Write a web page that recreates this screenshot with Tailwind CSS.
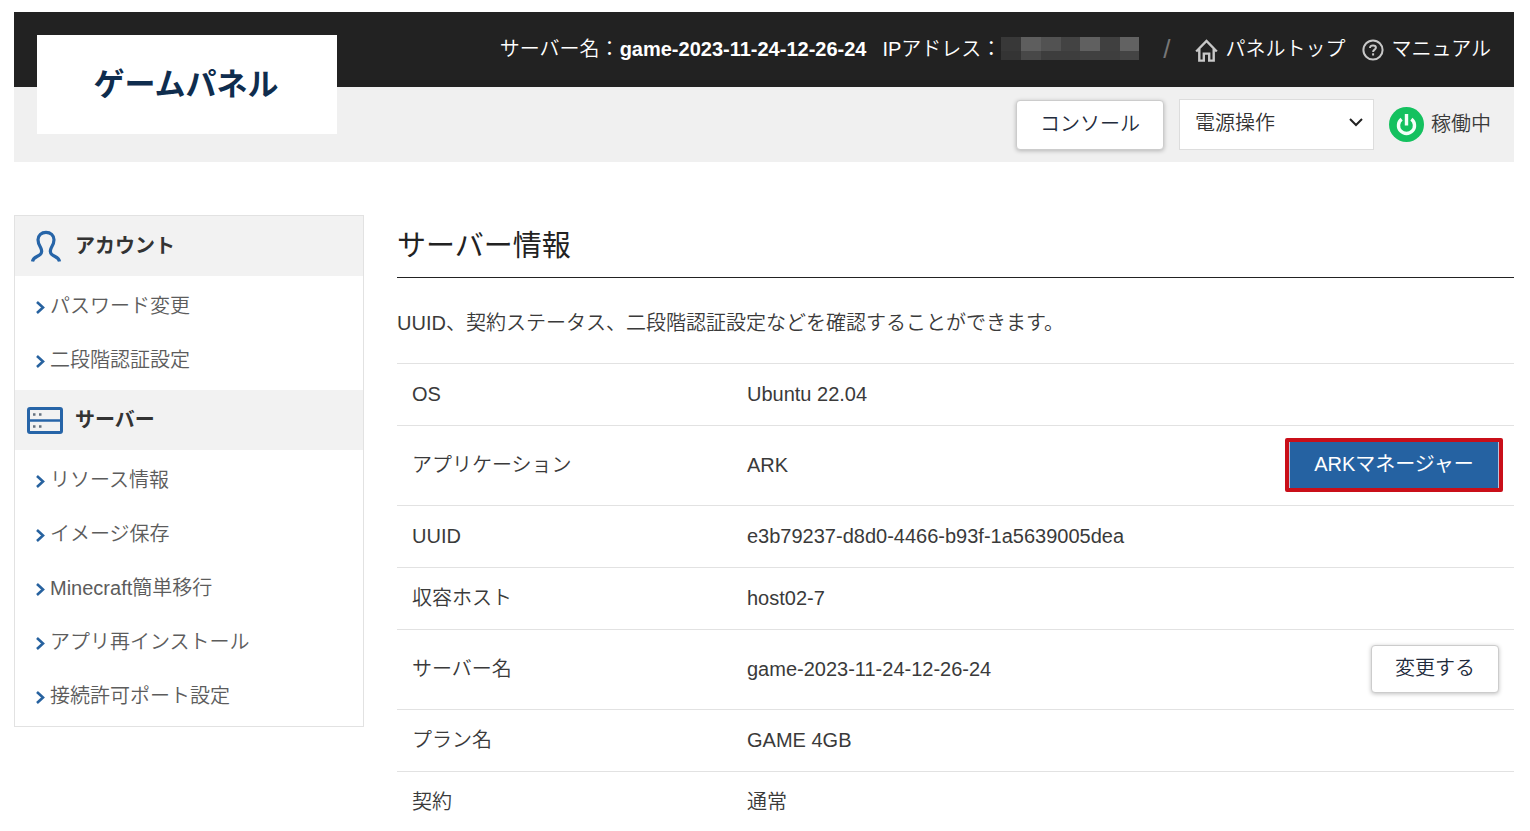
<!DOCTYPE html>
<html lang="ja">
<head>
<meta charset="utf-8">
<title>ゲームパネル</title>
<script src="https://cdn.jsdelivr.net/npm/@tailwindcss/browser@4"></script>
</head>
<body class="h-screen overflow-hidden bg-white px-[14px] pt-3 font-['Liberation_Sans','Noto_Sans_CJK_JP',sans-serif] text-[20px] leading-[30px] font-[350] text-[#3a3a3a]">
<header class="relative mr-[2px]">
  <a href="#" class="absolute top-[23px] left-[23px] flex h-[99px] w-[300px] items-center justify-center bg-white pr-[2px] text-[31px] font-bold text-[#0f2d4e]">ゲームパネル</a>
  <div class="flex h-[75px] items-center justify-end bg-[#222] pr-[23px] pb-[2px] text-white">
    <p>サーバー名：<strong class="font-bold">game-2023-11-24-12-26-24</strong></p>
    <p class="ml-4 flex items-center">IPアドレス：
      <span class="grid h-[23px] w-[138px] grid-cols-7 grid-rows-[14px_9px]" aria-hidden="true">
        <span class="bg-[#383838]"></span><span class="bg-[#5e5e5e]"></span><span class="bg-[#525252]"></span><span class="bg-[#434343]"></span><span class="bg-[#606060]"></span><span class="bg-[#404040]"></span><span class="bg-[#626262]"></span>
        <span class="bg-[#343434]"></span><span class="bg-[#484848]"></span><span class="bg-[#3d3d3d]"></span><span class="bg-[#3d3d3d]"></span><span class="bg-[#404040]"></span><span class="bg-[#3e3e3e]"></span><span class="bg-[#444]"></span>
      </span>
    </p>
    <span class="mx-6 text-[26px] text-[#777]">/</span>
    <a href="#" class="flex items-center gap-2">
      <svg class="mt-[3px] size-[23px]" viewBox="0 0 23 23" fill="none" stroke="#c8c8c8" stroke-width="2.400" aria-hidden="true"><path d="M1.200 12.500 11.500 2l10.300 10.500M4.300 10v11.600H8.800v-7h5.400v7h4.500V10"/></svg>
      パネルトップ</a>
    <a href="#" class="ml-4 flex items-center gap-2">
      <svg class="mt-[3px] size-[22px]" viewBox="0 0 22 22" fill="none" stroke="#c8c8c8" stroke-width="2" aria-hidden="true"><circle cx="11" cy="11" r="9.600"/><path d="M8 9c0-1.900 1.300-2.600 3-2.600s2.900.7 2.900 2.300c0 1.900-2.800 1.900-2.800 4.200"/><path d="M11.100 14.300v2.200"/></svg>
      マニュアル</a>
  </div>
  <div class="flex h-[75px] items-center justify-end bg-[#f0f0f0] pr-[23px]">
    <button type="button" class="h-[50px] w-[148px] rounded border border-[#ccc] bg-white pb-[2px] font-[350] text-[#222b3c] shadow-[0_1px_4px_rgba(0,0,0,0.25)]">コンソール</button>
    <div class="relative ml-[15px]">
      <select aria-label="電源操作" class="h-[51px] w-[195px] appearance-none border border-[#ddd] bg-white px-[15px] pb-1 font-[350] text-[#333]"><option>電源操作</option></select>
      <svg class="pointer-events-none absolute top-[19px] right-[11px] h-[9px] w-[14px]" viewBox="0 0 14 9" fill="none" stroke="#222" stroke-width="2" aria-hidden="true"><path d="M1 1l6 6 6-6"/></svg>
    </div>
    <svg class="ml-[15px] size-[35px]" viewBox="0 0 35 35" fill="none" stroke="#f4fff8" stroke-width="3.400" aria-hidden="true"><circle cx="17.500" cy="17.500" r="17.500" fill="#14c15f" stroke="none"/><path d="M12.600 12.200a8 8 0 1 0 9.800 0M17.500 7v11.500"/></svg>
    <span class="ml-[7px] pb-[2px]">稼働中</span>
  </div>
</header>

<div class="mt-[53px] mr-[2px] flex items-start gap-[33px]">
  <nav class="w-[350px] shrink-0 border border-[#e2e2e2] text-[#5c5c5c]">
    <h2 class="flex h-[60px] items-center bg-[#f2f2f2] pl-3 font-bold text-[#333]">
      <svg class="mr-3 h-[32px] w-[36px]" viewBox="0 0 36 32" fill="none" stroke="#2765a8" stroke-width="3.200" aria-hidden="true"><path d="M5.500 31.500C6 27.500 10 27 12.500 25c3-2 2.500-4.500 1.300-7C12 15.500 11 12.500 11 9.800 11 5.300 14.500 2.300 19 2.300s8 3 8 7.500c0 2.700-1 5.700-2.800 8.200-1.200 2.500-1.700 5 1.300 7 2.500 2 6.500 2.500 7 6.500"/></svg>
      アカウント</h2>
    <ul class="py-[3px]">
      <li><a href="#" class="flex h-[54px] items-center gap-[5px] pb-px pl-[21px]"><svg class="mt-[3px] h-[13px] w-[9px]" viewBox="0 0 9 13" fill="none" stroke="#27629f" stroke-width="2.600" aria-hidden="true"><path d="M1 1l6 5.500L1 12"/></svg>パスワード変更</a></li>
      <li><a href="#" class="flex h-[54px] items-center gap-[5px] pb-px pl-[21px]"><svg class="mt-[3px] h-[13px] w-[9px]" viewBox="0 0 9 13" fill="none" stroke="#27629f" stroke-width="2.600" aria-hidden="true"><path d="M1 1l6 5.500L1 12"/></svg>二段階認証設定</a></li>
    </ul>
    <h2 class="flex h-[60px] items-center bg-[#f2f2f2] pl-3 font-bold text-[#333]">
      <svg class="mr-3 h-[27px] w-[36px]" viewBox="0 0 36 27" fill="none" stroke="#2765a8" stroke-width="3" aria-hidden="true"><rect x="1.500" y="1.500" width="33" height="24" rx="1.500"/><path stroke-width="2.600" d="M1 13.500h34"/><path stroke="#65727f" stroke-width="2.400" d="M6 7.500h2.500M12 7.500h2.500M6 19.500h2.500M12 19.500h2.500"/></svg>
      サーバー</h2>
    <ul class="py-[3px]">
      <li><a href="#" class="flex h-[54px] items-center gap-[5px] pb-px pl-[21px]"><svg class="mt-[3px] h-[13px] w-[9px]" viewBox="0 0 9 13" fill="none" stroke="#27629f" stroke-width="2.600" aria-hidden="true"><path d="M1 1l6 5.500L1 12"/></svg>リソース情報</a></li>
      <li><a href="#" class="flex h-[54px] items-center gap-[5px] pb-px pl-[21px]"><svg class="mt-[3px] h-[13px] w-[9px]" viewBox="0 0 9 13" fill="none" stroke="#27629f" stroke-width="2.600" aria-hidden="true"><path d="M1 1l6 5.500L1 12"/></svg>イメージ保存</a></li>
      <li><a href="#" class="flex h-[54px] items-center gap-[5px] pb-px pl-[21px]"><svg class="mt-[3px] h-[13px] w-[9px]" viewBox="0 0 9 13" fill="none" stroke="#27629f" stroke-width="2.600" aria-hidden="true"><path d="M1 1l6 5.500L1 12"/></svg>Minecraft簡単移行</a></li>
      <li><a href="#" class="flex h-[54px] items-center gap-[5px] pb-px pl-[21px]"><svg class="mt-[3px] h-[13px] w-[9px]" viewBox="0 0 9 13" fill="none" stroke="#27629f" stroke-width="2.600" aria-hidden="true"><path d="M1 1l6 5.500L1 12"/></svg>アプリ再インストール</a></li>
      <li><a href="#" class="flex h-[54px] items-center gap-[5px] pb-px pl-[21px]"><svg class="mt-[3px] h-[13px] w-[9px]" viewBox="0 0 9 13" fill="none" stroke="#27629f" stroke-width="2.600" aria-hidden="true"><path d="M1 1l6 5.500L1 12"/></svg>接続許可ポート設定</a></li>
    </ul>
  </nav>

  <main class="min-w-0 flex-1">
    <h1 class="border-b border-[#222] pt-[11px] pb-[10px] text-[29px] leading-[41px] font-normal text-[#222]">サーバー情報</h1>
    <p class="mt-[30px]">UUID、契約ステータス、二段階認証設定などを確認することができます。</p>
    <table class="mt-[25px] w-full border-collapse text-left">
      <tbody>
        <tr class="h-[62px] border-t border-[#e2e2e2]"><th scope="row" class="w-[335px] px-[15px] pb-[2px] font-[350]">OS</th><td class="px-[15px] pb-[2px]" colspan="2">Ubuntu 22.04</td></tr>
        <tr class="h-[80px] border-t border-[#e2e2e2]"><th scope="row" class="px-[15px] pb-[2px] font-[350]">アプリケーション</th><td class="px-[15px] pb-[2px]">ARK</td><td class="pr-[11px] pb-[2px] text-right"><button type="button" class="h-[54px] w-[218px] rounded-xs border-4 border-[#c90f19] bg-[#c90f19] align-middle"><span class="flex h-full items-center justify-center border-x border-[#b9c4de] bg-[#2562a2] pb-[2px] font-normal text-white">ARKマネージャー</span></button></td></tr>
        <tr class="h-[62px] border-t border-[#e2e2e2]"><th scope="row" class="px-[15px] pb-[2px] font-[350]">UUID</th><td class="px-[15px] pb-[2px]" colspan="2">e3b79237-d8d0-4466-b93f-1a5639005dea</td></tr>
        <tr class="h-[62px] border-t border-[#e2e2e2]"><th scope="row" class="px-[15px] pb-[2px] font-[350]">収容ホスト</th><td class="px-[15px] pb-[2px]" colspan="2">host02-7</td></tr>
        <tr class="h-[80px] border-t border-[#e2e2e2]"><th scope="row" class="px-[15px] pb-[2px] font-[350]">サーバー名</th><td class="px-[15px] pb-[2px]">game-2023-11-24-12-26-24</td><td class="pr-[15px] pb-[2px] text-right"><button type="button" class="h-[48px] w-[128px] rounded border border-[#ccc] bg-white pb-[2px] align-middle font-[350] text-[#222b3c] shadow-[0_1px_4px_rgba(0,0,0,0.25)]">変更する</button></td></tr>
        <tr class="h-[62px] border-t border-[#e2e2e2]"><th scope="row" class="px-[15px] pb-[2px] font-[350]">プラン名</th><td class="px-[15px] pb-[2px]" colspan="2">GAME 4GB</td></tr>
        <tr class="h-[62px] border-t border-[#e2e2e2]"><th scope="row" class="px-[15px] pb-[2px] font-[350]">契約</th><td class="px-[15px] pb-[2px]" colspan="2">通常</td></tr>
      </tbody>
    </table>
  </main>
</div>
</body>
</html>
